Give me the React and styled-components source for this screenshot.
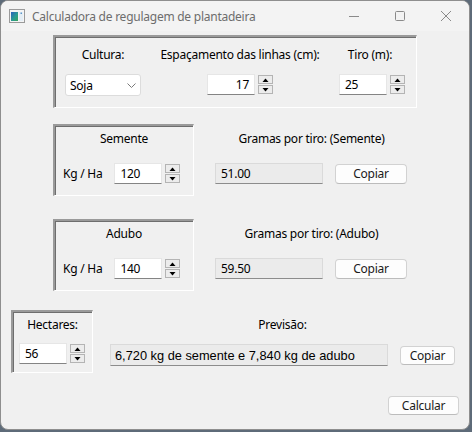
import React from "react";
import styled, { createGlobalStyle } from "styled-components";

const Global = createGlobalStyle`
  html, body { margin: 0; padding: 0; }
  body {
    background: #5e6b79;
    font-family: "Noto Sans", "Open Sans", sans-serif;
    font-size: 12px;
    letter-spacing: -0.25px;
    color: #000;
  }
`;

const Window = styled.div`
  width: 470px;
  height: 430px;
  box-sizing: border-box;
  border: 1px solid #8e8e8e;
  border-radius: 8px;
  overflow: hidden;
  background: #f0f0f0;
  display: flex;
  flex-direction: column;
`;

const TitleBar = styled.div`
  height: 30px;
  flex: none;
  display: flex;
  align-items: center;
  background: #f3f3f3;
`;

const AppIcon = styled.svg`
  margin-left: 8px;
  width: 16px;
  height: 14px;
  flex: none;
`;

const Title = styled.div`
  margin-left: 7px;
  flex: 1;
  font-size: 12px;
  color: #6d6d6d;
  white-space: nowrap;
`;

const CaptionButton = styled.div`
  width: 46px;
  height: 30px;
  display: flex;
  align-items: center;
  justify-content: center;
`;

const Client = styled.div`
  flex: 1;
  display: flex;
  flex-direction: column;
  padding-top: 4px;
`;

const Frame = styled.div`
  box-sizing: border-box;
  width: ${(p) => p.$w}px;
  height: ${(p) => p.$h}px;
  border-top: 2px solid #9a9a9a;
  border-left: 2px solid #9a9a9a;
  border-right: 1px solid #ffffff;
  border-bottom: 1px solid #ffffff;
  box-shadow: inset 1px 1px 0 #6e6e6e;
  flex: none;
`;

const TopFrame = styled(Frame)`
  margin-left: 52px;
  display: flex;
  padding: 10px 0 0 5px;
  gap: 10px;
`;

const Column = styled.div`
  width: ${(p) => p.$w}px;
  display: flex;
  flex-direction: column;
  align-items: center;
  gap: ${(p) => p.$gap || 11}px;
`;

const Label = styled.div`
  line-height: 16px;
  height: 16px;
  white-space: nowrap;
`;

const Select = styled.div`
  box-sizing: border-box;
  width: 76px;
  height: 22px;
  background: #fff;
  border: 1px solid #dcdcdc;
  border-radius: 3px;
  display: flex;
  align-items: center;
  justify-content: space-between;
  padding: 0 4px 0 4px;
`;

const SpinWrap = styled.div`
  display: flex;
  align-items: center;
  gap: 3px;
  margin-left: ${(p) => p.$ml || 0}px;
`;

const Input = styled.div`
  box-sizing: border-box;
  width: 48px;
  height: 21px;
  background: #fff;
  border: 1px solid #e6e6e6;
  border-bottom: 1px solid #848484;
  display: flex;
  align-items: center;
  justify-content: ${(p) => (p.$right ? "flex-end" : "flex-start")};
  padding: 0 5px;
`;

const SpinButtons = styled.div`
  display: flex;
  flex-direction: column;
  gap: 1px;
`;

const SpinBtn = styled.div`
  box-sizing: border-box;
  width: 15px;
  height: 9px;
  border: 1px solid #b4b4b4;
  background: #ececec;
  display: flex;
  align-items: center;
  justify-content: center;
`;

const Arrow = ({ up }) => (
  <svg width="7" height="4" viewBox="0 0 7 4">
    <path d={up ? "M0.5 4 L3.5 0.5 L6.5 4 Z" : "M0.5 0 L3.5 3.5 L6.5 0 Z"} fill="#000" />
  </svg>
);

const Spin = ({ value, right, ml }) => (
  <SpinWrap $ml={ml}>
    <Input $right={right}>{value}</Input>
    <SpinButtons>
      <SpinBtn><Arrow up /></SpinBtn>
      <SpinBtn><Arrow /></SpinBtn>
    </SpinButtons>
  </SpinWrap>
);

const SectionRow = styled.div`
  display: flex;
  align-items: flex-start;
  margin-top: ${(p) => p.$mt}px;
  margin-left: ${(p) => p.$ml}px;
`;

const SideFrame = styled(Frame)`
  display: flex;
  flex-direction: column;
  padding-top: 5px;
`;

const FrameTitle = styled(Label)`
  text-align: center;
  width: 100%;
`;

const KgRow = styled.div`
  display: flex;
  align-items: center;
  margin-top: 16px;
  padding-left: 8px;
  gap: 12px;
`;

const ResultArea = styled.div`
  width: ${(p) => p.$w}px;
  margin-left: ${(p) => p.$ml}px;
  padding-top: 7px;
  display: flex;
  flex-direction: column;
  align-items: center;
`;

const ResultRow = styled.div`
  width: 100%;
  display: flex;
  align-items: center;
  gap: 12px;
  margin-top: ${(p) => p.$mt}px;
`;

const Field = styled.div`
  box-sizing: border-box;
  width: ${(p) => p.$w}px;
  height: ${(p) => p.$h || 21}px;
  background: #ebebeb;
  border: 1px solid #dadada;
  border-bottom: 1px solid #8c8c8c;
  display: flex;
  align-items: center;
  padding-left: ${(p) => (p.$arial ? 4 : 5)}px;
  font-family: ${(p) => (p.$arial ? '"Liberation Sans", Arial, sans-serif' : "inherit")};
  font-size: ${(p) => (p.$arial ? 12.8 : 12)}px;
  letter-spacing: ${(p) => (p.$arial ? 0 : -0.25)}px;
`;

const Button = styled.div`
  box-sizing: border-box;
  width: ${(p) => p.$w}px;
  height: ${(p) => p.$h || 20}px;
  background: #fdfdfd;
  border: 1px solid #d2d2d2;
  border-bottom-color: #bcbcbc;
  border-radius: 4px;
  display: flex;
  align-items: center;
  justify-content: center;
  color: #1b1b1b;
`;

const HectFrame = styled(Frame)`
  display: flex;
  flex-direction: column;
  padding-top: 5px;
`;

const HectSpin = styled.div`
  margin-top: 10px;
  padding-left: 6px;
`;

const Footer = styled.div`
  display: flex;
  justify-content: flex-end;
  margin-top: 23px;
  padding-right: 10px;
`;

export default function App() {
  return (
    <>
      <Global />
      <Window>
        <TitleBar>
          <AppIcon viewBox="0 0 16 14">
            <rect x="0.5" y="0.5" width="15" height="13" fill="#f4f4f4" stroke="#9a9a9a" />
            <rect x="2" y="3" width="7" height="9" fill="url(#g)" />
            <rect x="10" y="3" width="4" height="9" fill="#e4eef6" />
            <rect x="11.5" y="3.5" width="1.5" height="1.5" fill="#5c95c8" />
            <defs>
              <linearGradient id="g" x1="0" y1="0" x2="1" y2="1">
                <stop offset="0" stopColor="#2a5fbf" />
                <stop offset="0.55" stopColor="#2a9c92" />
                <stop offset="1" stopColor="#39a35a" />
              </linearGradient>
            </defs>
          </AppIcon>
          <Title>Calculadora de regulagem de plantadeira</Title>
          <CaptionButton>
            <svg width="10" height="10" viewBox="0 0 10 10">
              <path d="M0 5.5 H10" stroke="#8a8a8a" strokeWidth="1" />
            </svg>
          </CaptionButton>
          <CaptionButton>
            <svg width="10" height="10" viewBox="0 0 10 10">
              <rect x="0.5" y="0.5" width="9" height="9" rx="1" fill="none" stroke="#8a8a8a" />
            </svg>
          </CaptionButton>
          <CaptionButton>
            <svg width="10" height="10" viewBox="0 0 10 10">
              <path d="M0 0 L10 10 M10 0 L0 10" stroke="#8a8a8a" strokeWidth="1" />
            </svg>
          </CaptionButton>
        </TitleBar>
        <Client>
          <TopFrame $w={364} $h={73}>
            <Column $w={86}>
              <Label>Cultura:</Label>
              <Select>
                <span>Soja</span>
                <svg width="9" height="5" viewBox="0 0 9 5">
                  <path d="M0.5 0.5 L4.5 4.5 L8.5 0.5" fill="none" stroke="#7a7a7a" />
                </svg>
              </Select>
            </Column>
            <Column $w={168}>
              <Label>Espaçamento das linhas (cm):</Label>
              <Spin value="17" right />
            </Column>
            <Column $w={72}>
              <Label>Tiro (m):</Label>
              <Spin value="25" ml={4} />
            </Column>
          </TopFrame>

          <SectionRow $mt={16} $ml={52}>
            <SideFrame $w={141} $h={72}>
              <FrameTitle>Semente</FrameTitle>
              <KgRow>
                <Label>Kg / Ha</Label>
                <Spin value="120" />
              </KgRow>
            </SideFrame>
            <ResultArea $w={193} $ml={21}>
              <Label>Gramas por tiro: (Semente)</Label>
              <ResultRow $mt={16}>
                <Field $w={108}>51.00</Field>
                <Button $w={72}>Copiar</Button>
              </ResultRow>
            </ResultArea>
          </SectionRow>

          <SectionRow $mt={23} $ml={52}>
            <SideFrame $w={141} $h={72}>
              <FrameTitle>Adubo</FrameTitle>
              <KgRow>
                <Label>Kg / Ha</Label>
                <Spin value="140" />
              </KgRow>
            </SideFrame>
            <ResultArea $w={193} $ml={21}>
              <Label>Gramas por tiro: (Adubo)</Label>
              <ResultRow $mt={16}>
                <Field $w={108}>59.50</Field>
                <Button $w={72}>Copiar</Button>
              </ResultRow>
            </ResultArea>
          </SectionRow>

          <SectionRow $mt={19} $ml={10}>
            <HectFrame $w={82} $h={63}>
              <FrameTitle>Hectares:</FrameTitle>
              <HectSpin>
                <Spin value="56" />
              </HectSpin>
            </HectFrame>
            <ResultArea $w={345} $ml={17}>
              <Label>Previsão:</Label>
              <ResultRow $mt={11}>
                <Field $w={278} $h={22} $arial>6,720 kg de semente e 7,840 kg de adubo</Field>
                <Button $w={55} $h={19}>Copiar</Button>
              </ResultRow>
            </ResultArea>
          </SectionRow>

          <Footer>
            <Button $w={71} $h={19}>Calcular</Button>
          </Footer>
        </Client>
      </Window>
    </>
  );
}
